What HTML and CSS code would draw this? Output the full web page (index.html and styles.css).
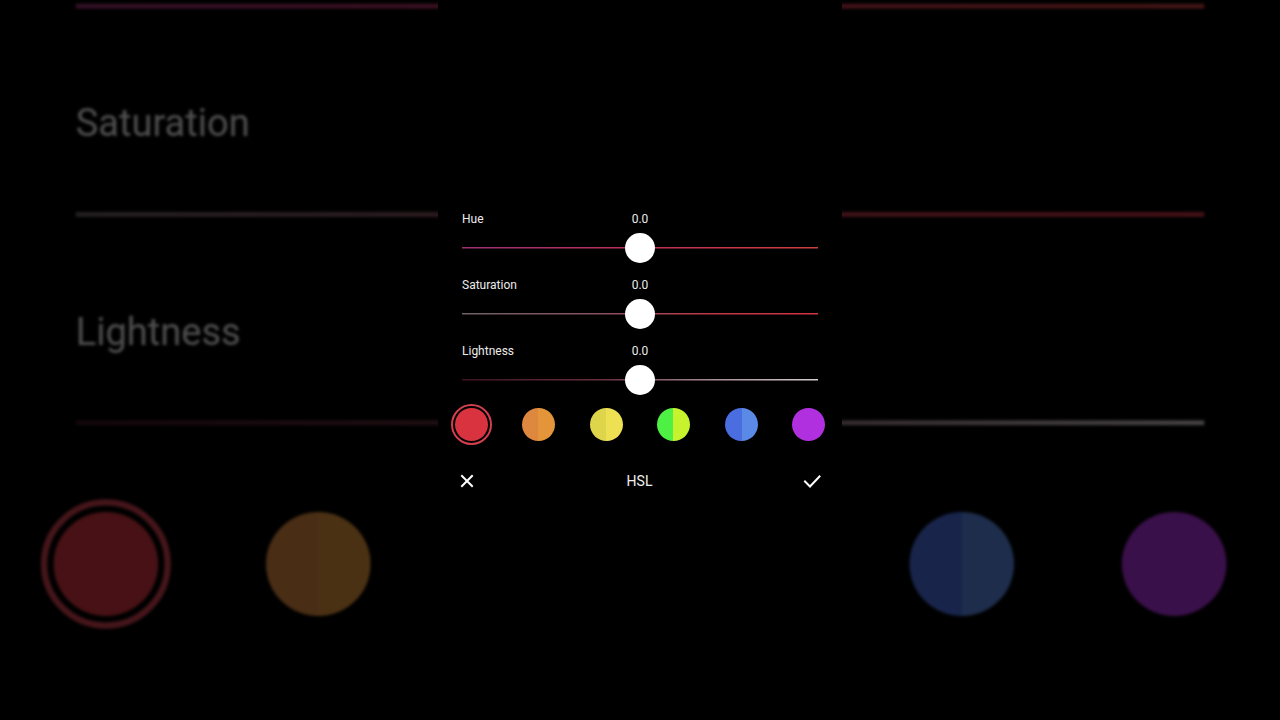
FILE: index.html
```html
<!DOCTYPE html>
<html lang="en">
<head>
<meta charset="utf-8">
<title>HSL</title>
<link rel="stylesheet" href="styles.css">
</head>
<body>
<div class="stage">
  <div class="screen screen--backdrop" aria-hidden="true">
    <div class="column">
      <div class="sliders">
        <div class="slider">
          <div class="slider-head"><span class="slider-label">Hue</span><span class="slider-value">0.0</span></div>
          <div class="slider-track track-hue"><span class="thumb"></span></div>
        </div>
        <div class="slider">
          <div class="slider-head"><span class="slider-label">Saturation</span><span class="slider-value">0.0</span></div>
          <div class="slider-track track-sat"><span class="thumb"></span></div>
        </div>
        <div class="slider">
          <div class="slider-head"><span class="slider-label">Lightness</span><span class="slider-value">0.0</span></div>
          <div class="slider-track track-light"><span class="thumb"></span></div>
        </div>
      </div>
      <div class="swatches">
        <div class="swatch selected"><span class="dot dot-red"></span></div>
        <div class="swatch"><span class="dot dot-orange"></span></div>
        <div class="swatch"><span class="dot dot-yellow"></span></div>
        <div class="swatch"><span class="dot dot-green"></span></div>
        <div class="swatch"><span class="dot dot-blue"></span></div>
        <div class="swatch"><span class="dot dot-purple"></span></div>
      </div>
      <div class="bottom-bar">
        <span class="icon-btn icon-left"><svg viewBox="0 0 24 24" width="24" height="24"><path d="M7 7 L17 17 M17 7 L7 17" stroke="#fff" stroke-width="2" fill="none" stroke-linecap="square"/></svg></span>
        <span class="bar-title">HSL</span>
        <span class="icon-btn icon-right"><svg viewBox="0 0 24 24" width="24" height="24"><path d="M5 12.5 L10 17.5 L19.5 7.5" stroke="#fff" stroke-width="2" fill="none" stroke-linecap="square"/></svg></span>
      </div>
    </div>
  </div>

  <div class="screen screen--front">
    <div class="column">
      <div class="sliders">
        <div class="slider">
          <div class="slider-head"><span class="slider-label">Hue</span><span class="slider-value">0.0</span></div>
          <div class="slider-track track-hue"><span class="thumb"></span></div>
        </div>
        <div class="slider">
          <div class="slider-head"><span class="slider-label">Saturation</span><span class="slider-value">0.0</span></div>
          <div class="slider-track track-sat"><span class="thumb"></span></div>
        </div>
        <div class="slider">
          <div class="slider-head"><span class="slider-label">Lightness</span><span class="slider-value">0.0</span></div>
          <div class="slider-track track-light"><span class="thumb"></span></div>
        </div>
      </div>
      <div class="swatches">
        <div class="swatch selected"><span class="dot dot-red"></span></div>
        <div class="swatch"><span class="dot dot-orange"></span></div>
        <div class="swatch"><span class="dot dot-yellow"></span></div>
        <div class="swatch"><span class="dot dot-green"></span></div>
        <div class="swatch"><span class="dot dot-blue"></span></div>
        <div class="swatch"><span class="dot dot-purple"></span></div>
      </div>
      <div class="bottom-bar">
        <span class="icon-btn icon-left"><svg viewBox="0 0 24 24" width="24" height="24"><path d="M7 7 L17 17 M17 7 L7 17" stroke="#fff" stroke-width="2" fill="none" stroke-linecap="square"/></svg></span>
        <span class="bar-title">HSL</span>
        <span class="icon-btn icon-right"><svg viewBox="0 0 24 24" width="24" height="24"><path d="M5 12.5 L10 17.5 L19.5 7.5" stroke="#fff" stroke-width="2" fill="none" stroke-linecap="square"/></svg></span>
      </div>
    </div>
  </div>
</div>
</body>
</html>
```

FILE: styles.css
```css
html, body {
  margin: 0;
  padding: 0;
  background: #000;
}

body {
  width: 1280px;
  height: 720px;
  overflow: hidden;
  font-family: "Roboto", "Inter", "Liberation Sans", sans-serif;
  color: #ececec;
}

.stage {
  display: grid;
  width: 1280px;
  height: 720px;
  overflow: hidden;
}

.screen {
  grid-area: 1 / 1;
  display: flex;
  justify-content: center;
  height: 720px;
}

.screen--backdrop {
  z-index: 0;
  transform: scale(3.17, 3.156);
  transform-origin: 640px 359.8px;
  filter: brightness(0.33) blur(0.45px);
}

.screen--front {
  z-index: 1;
  pointer-events: none;
}

.screen--front .column {
  pointer-events: auto;
}

.column {
  width: 404px;
  height: 720px;
  box-sizing: border-box;
  background: #000;
  padding-top: 211px;
  display: flex;
  flex-direction: column;
}

.sliders {
  display: flex;
  flex-direction: column;
  gap: 14px;
  padding: 0 24px;
}

.slider {
  display: flex;
  flex-direction: column;
  gap: 6px;
}

.slider-head {
  display: grid;
  grid-template-columns: 1fr auto 1fr;
  height: 16px;
  line-height: 16px;
  font-size: 12px;
}

.slider-label {
  justify-self: start;
}

.slider-value {
  justify-self: center;
}

.slider-track {
  height: 30px;
  display: flex;
  justify-content: center;
  align-items: center;
  background-repeat: no-repeat;
  background-position: center;
  background-size: 100% 1.5px;
}

.track-hue {
  background-image: linear-gradient(to right, #9c2f74, #b8305a 45%, #c83746 75%, #cc4040);
}

.track-sat {
  background-image: linear-gradient(to right, #6e6068, #8a5060 40%, #c03648 70%, #d23444);
}

.track-light {
  background-image: linear-gradient(to right, #3c1420, #6a3040 40%, #a88c98 70%, #d4ccd0);
}

.thumb {
  width: 30px;
  height: 30px;
  border-radius: 50%;
  background: #fff;
}

.swatches {
  display: flex;
  justify-content: space-between;
  align-items: center;
  padding: 0 13px 0 13px;
  margin-top: 9px;
}

.swatch {
  width: 41px;
  height: 41px;
  box-sizing: border-box;
  border-radius: 50%;
  display: flex;
  justify-content: center;
  align-items: center;
}

.swatch.selected {
  border: 2px solid #d2404f;
}

.dot {
  width: 33px;
  height: 33px;
  border-radius: 50%;
}

.dot-red { background: #d8333f; }
.dot-orange { background: linear-gradient(to right, #dd873f 50%, #e4953a 50%); }
.dot-yellow { background: linear-gradient(to right, #dfd54a 50%, #ede052 50%); }
.dot-green { background: linear-gradient(to right, #4ef043 50%, #c6f22e 50%); }
.dot-blue { background: linear-gradient(to right, #4a6ddf 50%, #5a89e6 50%); }
.dot-purple { background: #b02fdf; }

.bottom-bar {
  display: grid;
  grid-template-columns: 1fr auto 1fr;
  align-items: center;
  height: 24px;
  margin-top: 24px;
  padding: 0 18px 0 17px;
}

.icon-btn {
  display: flex;
  width: 24px;
  height: 24px;
}

.icon-left { justify-self: start; }
.icon-right { justify-self: end; }

.bar-title {
  font-size: 14px;
  line-height: 24px;
  color: #f0f0f0;
}
```
